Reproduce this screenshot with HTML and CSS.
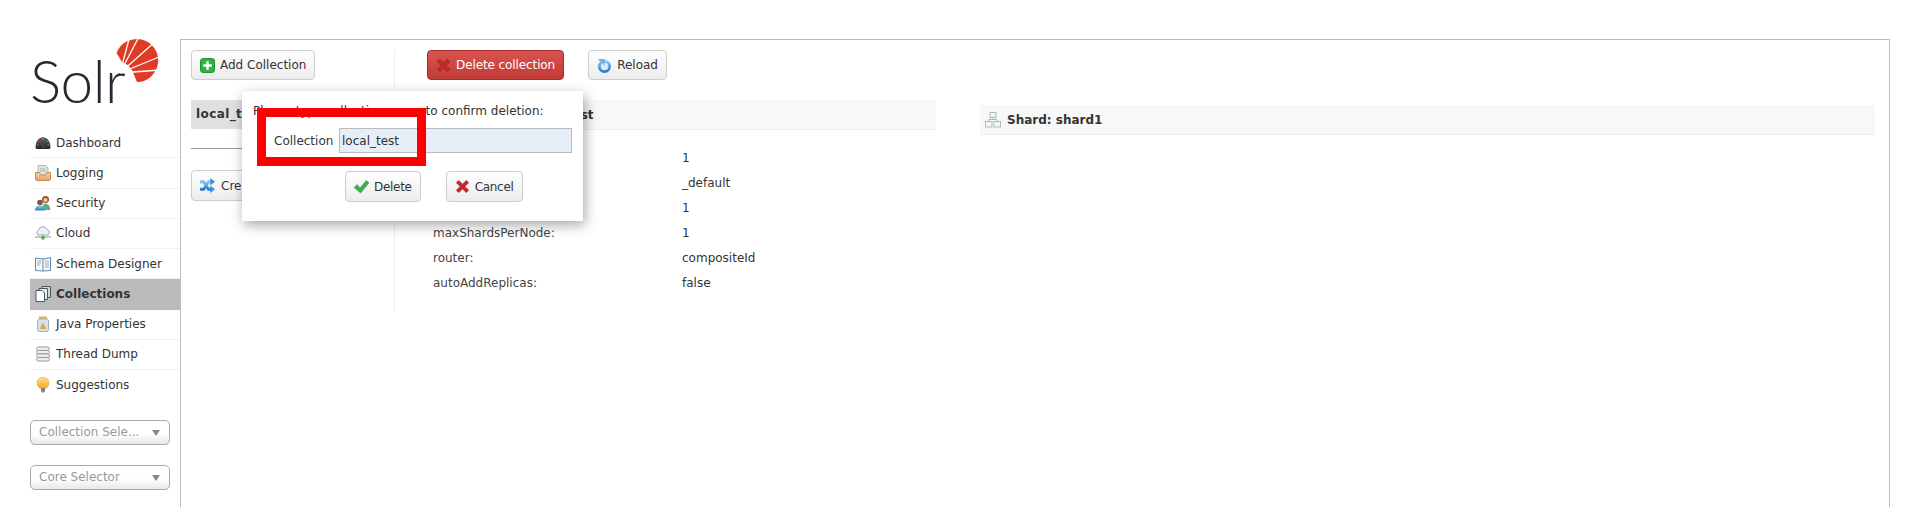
FILE: index.html
```html
<!DOCTYPE html>
<html lang="en">
<head>
<meta charset="utf-8">
<title>Solr Admin</title>
<link rel="stylesheet" href="styles.css">
</head>
<body>
<svg class="defs" width="0" height="0" aria-hidden="true">
  <defs>
    <linearGradient id="g-bulb" x1="0" y1="0" x2="0" y2="1"><stop offset="0" stop-color="#ffe28a"/><stop offset="1" stop-color="#f2a51e"/></linearGradient>
    <linearGradient id="g-tray" x1="0" y1="0" x2="0" y2="1"><stop offset="0" stop-color="#f6cfa4"/><stop offset="1" stop-color="#e2a468"/></linearGradient>
    <linearGradient id="g-blue" x1="0" y1="0" x2="0" y2="1"><stop offset="0" stop-color="#8cc4ef"/><stop offset="1" stop-color="#2c7cc8"/></linearGradient>
    <linearGradient id="g-gauge" x1="0" y1="0" x2="0" y2="1"><stop offset="0" stop-color="#5b636b"/><stop offset="1" stop-color="#23272b"/></linearGradient>
  </defs>
  <symbol id="i-x" viewBox="0 0 16 16"><path d="M1.500 4 4 1.500 8 5.500 12 1.500 14.500 4 10.500 8 14.500 12 12 14.500 8 10.500 4 14.500 1.500 12 5.500 8Z" fill="#c8282b" stroke="#8e1a1c" stroke-width=".7"/></symbol>
</svg>
<div class="page">
  <aside class="side">
    <div class="logo">
      <span class="logo-text">Solr</span>
      <svg class="sun" width="44" height="44" viewBox="0 0 44 44">
        <path d="M.5 15A21.500 21.500 0 1 1 21 44L16 32Q12 26 6 24Z" fill="#e03b24"/>
        <g stroke="#fff" stroke-width="1.300">
          <path d="M4 35 13.300 0M4 35 22.300 0M4 35 36.500 6M4 35 43 19M4 35 44 32"/>
        </g>
      </svg>
    </div>
    <nav class="nav">
      <a class="nav-item"><svg class="ni" viewBox="0 0 17 16"><path d="M.5 13.500C.5 6 4 2 8.500 2s8 4 8 11.500l-1.500 1H2Z" fill="url(#g-gauge)"/><path d="M3 6 4 7M8.500 3.500V5M14 6 13 7M2 10h1.500M15 10h-1.500" stroke="#aab" stroke-width=".8"/><path d="M4 5.500 10 13" stroke="#e02020" stroke-width="1"/></svg>Dashboard</a>
      <a class="nav-item"><svg class="ni" viewBox="0 0 16 16"><path d="M3 .5h7.500L13 3v8H3Z" fill="#dce8e2" stroke="#a8bab4"/><path d="M5 4h5M5 6h6" stroke="#9fb2ac"/><path d="M.5 7.500h4l1 2.500h5l1-2.500h4v7l-1 1h-13l-1-1Z" fill="url(#g-tray)" stroke="#c48a50"/></svg>Logging</a>
      <a class="nav-item"><svg class="ni" viewBox="0 0 16 16"><path d="M7.500 15v-3.500Q8 8.500 10.500 8.500T14.500 11l1 4Z" fill="#5fb07a"/><circle cx="10.500" cy="4.500" r="3.500" fill="#a5522a"/><circle cx="10.500" cy="5" r="2" fill="#f0c8a0"/><circle cx="5" cy="7.500" r="2.800" fill="#7a5a42"/><path d="M0 15.500Q0 10.500 5 10.500t5 5Z" fill="url(#g-blue)"/></svg>Security</a>
      <a class="nav-item"><svg class="ni" viewBox="0 0 16 16"><path d="M3 10A3 3 0 0 1 3.500 5 4.500 4.500 0 0 1 12 4.500 3 3 0 0 1 13 10Z" fill="#eceef0" stroke="#a6a9b0"/><path d="M0 12h16" stroke="#8d8d8d"/><path d="M8 10v2" stroke="#777"/><circle cx="8" cy="13" r="1.800" fill="#3bb03b"/></svg>Cloud</a>
      <a class="nav-item"><svg class="ni" viewBox="0 0 16 16"><path d="M.5 2 8 3l7.500-1.500V14.500L8 15 .5 14.500Z" fill="#f4f8fb" stroke="#5d8ab0"/><path d="M8 3v12" stroke="#5d8ab0"/><path d="M10 5h4M10 7h4M10 9h4M10 11h4M2 5h4M2 7h4M2 9h3" stroke="#a8b0b4"/></svg>Schema Designer</a>
      <a class="nav-item active"><svg class="ni" viewBox="0 0 16 16"><path d="M7 .5h8.500v11H7Z" fill="#cfd8d8" stroke="#4a5a60"/><path d="M4 2.500h8.500v11H4Z" fill="#e4ecec" stroke="#4a5a60"/><path d="M1 4.500h6L9.500 7v8.500H1Z" fill="#fff" stroke="#4a5a60"/></svg>Collections</a>
      <a class="nav-item"><svg class="ni" viewBox="0 0 16 16"><rect x="4" y=".5" width="8" height="2.500" fill="#d9b64e"/><rect x="2.500" y="3" width="11" height="12.500" rx="2" fill="#d5e2ee" stroke="#9fb0c0"/><path d="M8 6.500 11.500 13h-7Z" fill="#e0a93c"/></svg>Java Properties</a>
      <a class="nav-item"><svg class="ni" viewBox="0 0 16 16"><g fill="#eee" stroke="#9a9a9a"><path d="M2.500 1h11l1 2-1 1.500h-11l-1-2Z"/><path d="M2.500 4.500h11l1 2-1 1.500h-11l-1-2Z"/><path d="M2.500 8h11l1 2-1 1.500h-11l-1-2Z"/><path d="M2.500 11.500h11l1 2-1 1.500h-11l-1-2Z"/></g></svg>Thread Dump</a>
      <a class="nav-item"><svg class="ni" viewBox="0 0 16 16"><circle cx="8" cy="6" r="6" fill="url(#g-bulb)" stroke="#e09a18" stroke-width=".5"/><path d="M6 11h4v3l-1 1.500H7L6 14Z" fill="#808080"/></svg>Suggestions</a>
    </nav>
    <div class="selector">Collection Sele...<i class="caret"></i></div>
    <div class="selector">Core Selector<i class="caret"></i></div>
  </aside>

  <main class="panel">
    <section class="left">
      <button class="btn"><svg class="bi" viewBox="0 0 16 16"><rect x=".5" y=".5" width="15" height="15" rx="3" fill="#2cb53d" stroke="#1b8a2b"/><path d="M8 3.500v9M3.500 8h9" stroke="#fff" stroke-width="2.600"/></svg>Add Collection</button>
      <div class="coll-item">local_test</div>
      <hr class="rule">
      <button class="btn"><svg class="bi" viewBox="0 0 16 16"><path d="M0 4h4l5 8h3M0 12h4l5-8h3" fill="none" stroke="url(#g-blue)" stroke-width="3"/><path d="M11 0 16 4 11 8ZM11 8 16 12 11 16Z" fill="#3f8fd8"/></svg>Create Alias</button>
    </section>
    <section class="right">
      <div class="actions">
        <button class="btn danger"><svg class="bi"><use href="#i-x"/></svg>Delete collection</button>
        <button class="btn"><svg class="bi" viewBox="0 0 16 16"><circle cx="8" cy="9" r="7" fill="#d8ebfa"/><circle cx="8" cy="9" r="5.500" fill="none" stroke="url(#g-blue)" stroke-width="3"/><path d="M1 1h7v7Z" fill="#6fb0e6"/></svg>Reload</button>
      </div>
      <div class="columns">
        <div class="col-info">
          <h2 class="head info">Collection: local_test</h2>
          <dl class="props">
            <dt>Shard count:</dt><dd>1</dd>
            <dt>configName:</dt><dd>_default</dd>
            <dt>replicationFactor:</dt><dd>1</dd>
            <dt>maxShardsPerNode:</dt><dd>1</dd>
            <dt>router:</dt><dd>compositeId</dd>
            <dt>autoAddReplicas:</dt><dd>false</dd>
          </dl>
        </div>
        <div class="col-shard">
          <h2 class="head shard"><svg class="si" viewBox="0 0 16 16"><g fill="#f2f6f4" stroke="#a9bdb6"><rect x="5" y=".5" width="6" height="5"/><rect x=".5" y="9.500" width="6.500" height="5.500"/><rect x="9" y="9.500" width="6.500" height="5.500"/></g><path d="M8 5.500v2M4 9.500v-2h8v2" fill="none" stroke="#a9bdb6"/></svg>Shard: shard1</h2>
        </div>
      </div>
    </section>
  </main>
</div>

<div class="dialog">
  <p class="dialog-msg">Please type collection name to confirm deletion:</p>
  <div class="field"><label class="field-label">Collection</label><input class="field-input" value="local_test"></div>
  <div class="dialog-btns">
    <button class="btn"><svg class="bi" viewBox="0 0 16 16"><path d="M0 9 3.500 6 6.500 9.500 13 1.500l3 2.500-9 11Z" fill="#3cae4a" stroke="#268a34" stroke-width=".5"/></svg>Delete</button>
    <button class="btn"><svg class="bi"><use href="#i-x"/></svg>Cancel</button>
  </div>
</div>
<div class="annot"></div>
</body>
</html>
```
FILE: styles.css
```css
* { box-sizing: border-box; }
html, body { margin: 0; height: 100%; overflow: hidden; }
body { background: #fff; color: #333; font: 12px/1 "DejaVu Sans", Verdana, sans-serif; }
.defs { position: absolute; }
.page { display: flex; padding: 39px 28px 0 30px; height: 507px; }

.side { width: 150px; flex: none; }
.logo { position: relative; height: 89px; }
.logo-text { display: block; padding-top: 12px; font: 300 58.500px/1 Lato, sans-serif; color: #2b2730; letter-spacing: -.5px; }
.sun { position: absolute; left: 86px; top: -1px; }

.nav-item { display: flex; align-items: center; height: 30.250px; padding-left: 5px; gap: 5px; color: #333; border-bottom: 1px solid #f0f0f0; }
.nav-item:last-child { border-bottom: 0; }
.nav-item.active { background: #bbb; font-weight: bold; border-bottom: 0; }
.ni { width: 16px; height: 16px; flex: none; }

.selector { position: relative; width: 140px; height: 25px; margin-top: 20px; padding: 0 8px; line-height: 23px; color: #999; border: 1px solid #aaa; border-radius: 5px; background: linear-gradient(#fff 55%, #e8e8e8); }
.caret { position: absolute; right: 9px; top: 9px; border: 4px solid transparent; border-top: 6px solid #888; border-bottom: 0; }

.panel { flex: 1; display: flex; border: 1px solid #bbb; border-bottom: 0; padding: 10px 0 0 10px; }
.left { width: 203px; flex: none; }
.coll-item { width: 100%; height: 29px; margin-top: 20px; padding: 0 5px; line-height: 29px; background: #e0e0e0; font-weight: bold; letter-spacing: .4px; }
.rule { width: 100%; height: 1px; margin: 19px 0 21px; border: 0; background: #999; }
.right { flex: 1; display: flex; flex-direction: column; align-self: flex-start; height: 262px; border-left: 1px solid #eee; padding: 0 14px 0 32px; }
.actions { display: flex; gap: 24px; }

.btn { display: inline-flex; align-items: center; gap: 5px; height: 30px; padding: 0 8px; font: 12px/1 "DejaVu Sans", Verdana, sans-serif; color: #333; border: 1px solid #ccc; border-radius: 4px; background: linear-gradient(#fff, #ececec); white-space: nowrap; }
.rule + .btn { height: 31px; gap: 6px; }
.danger { color: #fff; letter-spacing: -.1px; background: linear-gradient(#d9534f, #c03a36); border-color: #a92b27; }
.bi { width: 15px; height: 15px; flex: none; }

.columns { display: flex; gap: 44px; margin: 20px 0 0 4px; }
.col-info { width: 505px; flex: none; }
.col-shard { flex: 1; padding-top: 5px; }
.head { display: flex; align-items: center; height: 30px; margin: 0; padding: 0 5px; font-size: 12px; font-weight: bold; background: #f8f8f8; border-bottom: 1px solid #eee; }
.info { padding-left: 22px; }
.si { width: 16px; height: 16px; margin-right: 6px; flex: none; }
.props { display: grid; grid-template-columns: 249px 1fr; margin: 16px 0 0 2px; }
.props dt, .props dd { margin: 0; height: 25px; line-height: 25px; }
.props dt { color: #444; }

.dialog { position: absolute; left: 242px; top: 91px; width: 341px; height: 130px; padding: 14px 10px 0 11px; background: #fff; box-shadow: 2px 4px 12px rgba(0,0,0,.35); }
.dialog-msg { margin: 0; height: 23px; line-height: 12px; white-space: nowrap; }
.field { display: flex; align-items: center; height: 25px; }
.field-label { width: 63px; padding-left: 21px; flex: none; white-space: nowrap; margin-right: 23px; }
.field-input { width: 233px; height: 25px; padding: 0 2px; font: 12px "DejaVu Sans", Verdana, sans-serif; color: #333; background: #e6eefa; border: 1px solid #bbb; border-radius: 0; }
.dialog-btns { display: flex; gap: 25px; margin-top: 18px; padding-left: 92px; }
.dialog-btns .btn { height: 31px; letter-spacing: -.3px; }
.annot { position: absolute; left: 257px; top: 108px; width: 169px; height: 58px; border: 9px solid #f00; }
```
